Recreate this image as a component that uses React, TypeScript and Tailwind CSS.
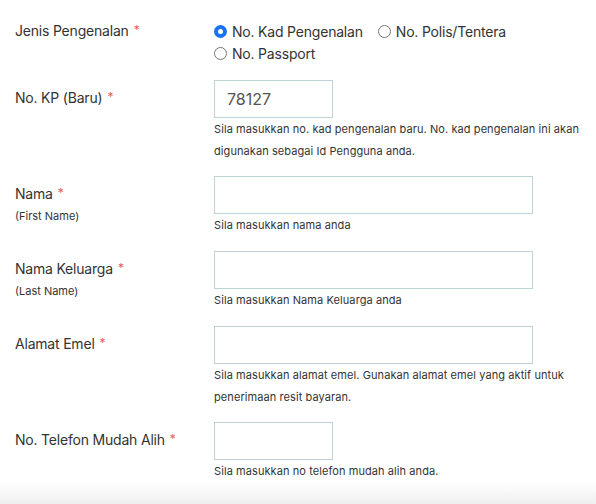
import React from "react";

const font = { fontFamily: "Inter, 'Noto Sans', sans-serif" };

function Req() {
  return <span className="ml-[5px] text-[12px] text-[#ec5b5b] relative top-[-2px]">*</span>;
}

function Radio({ checked, label }: { checked?: boolean; label: string }) {
  return (
    <label className="flex items-center h-[22px] mr-[15px]">
      {checked ? (
        <span className="w-[13px] h-[13px] rounded-full bg-[#1a73f5] flex items-center justify-center">
          <span className="w-[5px] h-[5px] rounded-full bg-white" />
        </span>
      ) : (
        <span className="w-[13px] h-[13px] rounded-full border border-[#767676] bg-white" />
      )}
      <span className="ml-[5px] text-[14px] tracking-[-0.2px] text-[#333]">{label}</span>
    </label>
  );
}

function Field({
  label,
  sub,
  wide,
  value,
  help,
  mb,
}: {
  label: string;
  sub?: string;
  wide?: boolean;
  value?: string;
  help: React.ReactNode;
  mb: string;
}) {
  return (
    <div className={`flex ${mb}`}>
      <div className="w-[199px] shrink-0 pt-[7px]">
        <div className="text-[14px] tracking-[-0.2px] leading-[22px] text-[#333]">
          {label}
          <Req />
        </div>
        {sub && <div className="text-[11px] leading-[20px] text-[#333]">{sub}</div>}
      </div>
      <div className="flex-1">
        <div
          className={`${wide ? "w-[319px]" : "w-[119px]"} h-[38px] border border-[#bfd2da] bg-white flex items-center pl-[12px] text-[16px] text-[#555]`}
        >
          {value}
        </div>
        <div className="text-[11px] tracking-[0.08px] leading-[22px] text-[#333] pr-[4px]">{help}</div>
      </div>
    </div>
  );
}

export default function App() {
  return (
    <div className="w-[596px] h-[504px] bg-white overflow-hidden flex flex-col" style={font}>
      <div className="pl-[15px] pt-[20px]">
        <div className="flex mb-[16px]">
          <div className="w-[199px] shrink-0 text-[14px] tracking-[-0.2px] leading-[22px] text-[#333]">
            Jenis Pengenalan
            <Req />
          </div>
          <div className="flex flex-wrap w-[320px]">
            <Radio checked label="No. Kad Pengenalan" />
            <Radio label="No. Polis/Tentera" />
            <Radio label="No. Passport" />
          </div>
        </div>
        <Field
          label="No. KP (Baru)"
          value="78127"
          help={
            <>
              Sila masukkan no. kad pengenalan baru. No. kad pengenalan ini akan
              <br />
              digunakan sebagai Id Pengguna anda.
            </>
          }
          mb="mb-[14px]"
        />
        <Field label="Nama" sub="(First Name)" wide help="Sila masukkan nama anda" mb="mb-[15px]" />
        <Field
          label="Nama Keluarga"
          sub="(Last Name)"
          wide
          help="Sila masukkan Nama Keluarga anda"
          mb="mb-[15px]"
        />
        <Field
          label="Alamat Emel"
          wide
          help={
            <>
              Sila masukkan alamat emel. Gunakan alamat emel yang aktif untuk
              <br />
              penerimaan resit bayaran.
            </>
          }
          mb="mb-[14px]"
        />
        <Field label="No. Telefon Mudah Alih" help="Sila masukkan no telefon mudah alih anda." mb="mb-0" />
      </div>
      <div className="flex-1 bg-gradient-to-b from-white to-[#efefef]" />
    </div>
  );
}
